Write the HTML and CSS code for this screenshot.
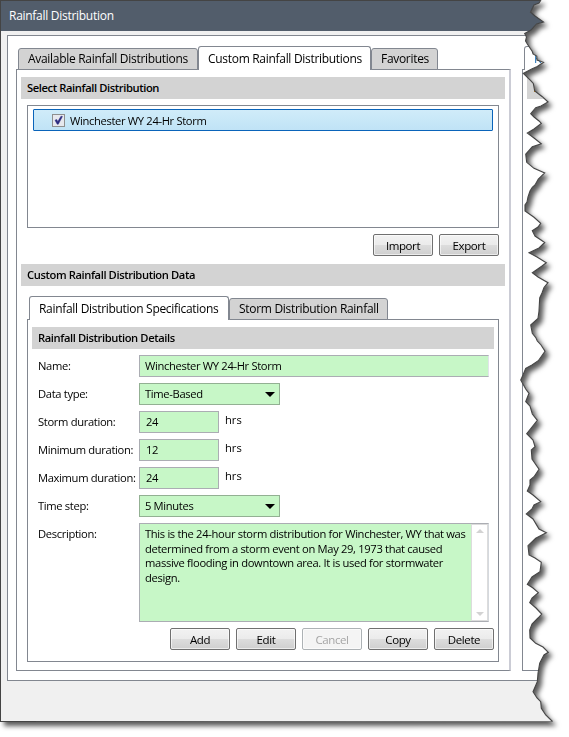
FILE: index.html
```html
<!DOCTYPE html>
<html lang="en">
<head>
    <meta charset="UTF-8">
    <meta name="viewport" content="width=device-width, initial-scale=1.0">
    <title>Rainfall Distribution</title>
    <link rel="stylesheet" href="styles.css">
</head>
<body>
    <div class="window-shadow">
        <div class="window">
            <div class="title-bar">Rainfall Distribution</div>
            <div class="main-panel">
                <div class="left-side">
                    <div class="tabs">
                        <div class="tab tab-available">Available Rainfall Distributions</div>
                        <div class="tab tab-custom active">Custom Rainfall Distributions</div>
                        <div class="tab tab-favorites">Favorites</div>
                    </div>
                    <div class="tab-page">
                        <div class="section-header">Select Rainfall Distribution</div>
                        <div class="list-box">
                            <div class="list-item">
                                <span class="check-box">
                                    <svg width="11" height="11" viewBox="0 0 11 11"><path d="M2 5.2 L3.7 4.5 L4.8 6.6 L8 1.2 L9.4 1.5 L5.3 9.2 L4.2 9.2 Z" fill="#2b2b80" stroke="#2b2b80" stroke-width="0.5"/></svg>
                                </span>
                                <span>Winchester WY 24-Hr Storm</span>
                            </div>
                        </div>
                        <div class="list-buttons">
                            <button class="btn">Import</button>
                            <button class="btn">Export</button>
                        </div>
                        <div class="section-header">Custom Rainfall Distribution Data</div>
                        <div class="tabs inner-tabs">
                            <div class="tab tab-specs active">Rainfall Distribution Specifications</div>
                            <div class="tab tab-storm">Storm Distribution Rainfall</div>
                        </div>
                        <div class="details">
                            <div class="section-header">Rainfall Distribution Details</div>
                            <div class="form">
                                <div class="row">
                                    <label>Name:</label>
                                    <div class="field field-wide">Winchester WY 24-Hr Storm</div>
                                </div>
                                <div class="row">
                                    <label>Data type:</label>
                                    <div class="field field-select"><span>Time-Based</span><i class="arrow"></i></div>
                                </div>
                                <div class="row">
                                    <label>Storm duration:</label>
                                    <div class="field field-num">24</div>
                                    <span class="unit">hrs</span>
                                </div>
                                <div class="row">
                                    <label>Minimum duration:</label>
                                    <div class="field field-num">12</div>
                                    <span class="unit">hrs</span>
                                </div>
                                <div class="row">
                                    <label>Maximum duration:</label>
                                    <div class="field field-num">24</div>
                                    <span class="unit">hrs</span>
                                </div>
                                <div class="row">
                                    <label>Time step:</label>
                                    <div class="field field-select"><span>5 Minutes</span><i class="arrow"></i></div>
                                </div>
                                <div class="row">
                                    <label>Description:</label>
                                    <div class="field field-area">
                                        <p>This is the 24-hour storm distribution for Winchester, WY that was<br>determined from a storm event on May 29, 1973 that caused<br>massive flooding in downtown area. It is used for stormwater<br>design.</p>
                                        <div class="scroll-bar"><i class="scroll-up"></i><i class="scroll-down"></i></div>
                                    </div>
                                </div>
                            </div>
                            <div class="form-buttons">
                                <button class="btn">Add</button>
                                <button class="btn">Edit</button>
                                <button class="btn" disabled>Cancel</button>
                                <button class="btn">Copy</button>
                                <button class="btn">Delete</button>
                            </div>
                        </div>
                    </div>
                </div>
                <div class="right-side">
                    <div class="tabs"><div class="tab active">R</div></div>
                    <div class="tab-page"><div class="section-header">R</div></div>
                </div>
            </div>
        </div>
    </div>

    <!-- torn right edge, clip shape and outline -->
    <svg class="torn-edge" width="569" height="737" viewBox="0 0 569 737">
        <defs>
            <clipPath id="torn-clip">
                <path d="M0 0 L541 0 L539 3 L534 5 L530.5 12 L535 16 L543.5 22 L536.5 24 L531 30 L524.7 33.5 L526.5 37 L525.5 41 L527.3 44 L532.3 51.5 L533 54 L536.7 56 L537 60 L543.5 62.3 L537.3 66.5 L531.7 69 L523.3 73.5 L530.7 80.7 L533.3 83.5 L534.7 91 L542.3 96.7 L548 102 L541 106 L535.7 107.7 L530.7 113.7 L534 117 L539 121 L541.3 123.5 L534 129 L527.3 133 L534 138 L541.3 143.7 L532.3 146.7 L525.7 154.3 L526.7 162.3 L534 168.3 L544.7 173 L538.3 179 L535 185 L532.3 187.3 L530 191 L528 197 L527 202 L525 205 L525 211 L534 217.3 L540.7 223.3 L538 227 L532.3 230.7 L535 236 L541 240 L544.7 242.5 L539 248 L529 252.7 L537 257 L546.3 262.7 L542 266 L532.3 272.7 L538 277 L548 282.7 L544 287.5 L542 293 L539.7 298 L539 311 L538 318.3 L530.7 325 L532.3 333.3 L536 338 L537.3 341 L541 345 L545 351.3 L538.3 360.7 L532 365 L525.7 368.3 L523 375 L520.7 380 L525.7 389 L529 393.3 L525.7 401.7 L530 406 L532.3 414 L537.3 420.3 L532 427 L526.7 433.7 L533 440 L535 446.7 L531.3 450 L532 459 L539 469.3 L534 476.7 L530 480 L530 485 L527.3 491 L533 495 L540.7 501.7 L534 505 L532 509 L526.3 514 L533 519 L539 529 L546.3 532.7 L535.7 538.3 L528 545.7 L529 555 L535 558 L541.3 562.3 L540 571.7 L532 577 L527.3 584.3 L533 588 L538.3 592.7 L532 598 L529.7 602.7 L536 608 L541.7 614 L538 618 L532 624 L529.7 630 L530 638 L535.7 643.3 L543 647 L548.3 652.3 L544 655 L539.7 663.3 L538 673.3 L537.3 681.7 L533 691.7 L537 698 L540.7 701.7 L541.3 708.3 L545.7 715 L552.5 721.5 L0 722 Z"/>
            </clipPath>
        </defs>
        <path class="tear-line" d="M541 0 L539 3 L534 5 L530.5 12 L535 16 L543.5 22 L536.5 24 L531 30 L524.7 33.5 L526.5 37 L525.5 41 L527.3 44 L532.3 51.5 L533 54 L536.7 56 L537 60 L543.5 62.3 L537.3 66.5 L531.7 69 L523.3 73.5 L530.7 80.7 L533.3 83.5 L534.7 91 L542.3 96.7 L548 102 L541 106 L535.7 107.7 L530.7 113.7 L534 117 L539 121 L541.3 123.5 L534 129 L527.3 133 L534 138 L541.3 143.7 L532.3 146.7 L525.7 154.3 L526.7 162.3 L534 168.3 L544.7 173 L538.3 179 L535 185 L532.3 187.3 L530 191 L528 197 L527 202 L525 205 L525 211 L534 217.3 L540.7 223.3 L538 227 L532.3 230.7 L535 236 L541 240 L544.7 242.5 L539 248 L529 252.7 L537 257 L546.3 262.7 L542 266 L532.3 272.7 L538 277 L548 282.7 L544 287.5 L542 293 L539.7 298 L539 311 L538 318.3 L530.7 325 L532.3 333.3 L536 338 L537.3 341 L541 345 L545 351.3 L538.3 360.7 L532 365 L525.7 368.3 L523 375 L520.7 380 L525.7 389 L529 393.3 L525.7 401.7 L530 406 L532.3 414 L537.3 420.3 L532 427 L526.7 433.7 L533 440 L535 446.7 L531.3 450 L532 459 L539 469.3 L534 476.7 L530 480 L530 485 L527.3 491 L533 495 L540.7 501.7 L534 505 L532 509 L526.3 514 L533 519 L539 529 L546.3 532.7 L535.7 538.3 L528 545.7 L529 555 L535 558 L541.3 562.3 L540 571.7 L532 577 L527.3 584.3 L533 588 L538.3 592.7 L532 598 L529.7 602.7 L536 608 L541.7 614 L538 618 L532 624 L529.7 630 L530 638 L535.7 643.3 L543 647 L548.3 652.3 L544 655 L539.7 663.3 L538 673.3 L537.3 681.7 L533 691.7 L537 698 L540.7 701.7 L541.3 708.3 L545.7 715 L552.5 721.5"/>
    </svg>
</body>
</html>
```
FILE: styles.css
```css
* {
    box-sizing: border-box;
}
body {
    margin: 0;
    width: 569px;
    height: 737px;
    overflow: hidden;
    background-color: #fff;
    font-family: "Open Sans", "Noto Sans", sans-serif;
    font-size: 11.2px;
    line-height: 16px;
    letter-spacing: -0.34px;
    color: #000;
}
.window-shadow {
    filter: drop-shadow(4px 4px 2.5px rgba(0,0,0,0.65));
}
.window {
    width: 569px;
    height: 722px;
    border: 1px solid #444;
    border-right: none;
    background-color: #f0f0f0;
    clip-path: url(#torn-clip);
}
.torn-edge {
    position: absolute;
    left: 0;
    top: 0;
}
.tear-line {
    fill: none;
    stroke: #444;
    stroke-width: 1.1;
}
.title-bar {
    height: 30px;
    padding: 7px 8px;
    background-color: #525d6b;
    color: #fff;
    font-size: 12px;
    letter-spacing: -0.28px;
}
.main-panel {
    display: flex;
    gap: 11px;
    height: 646px;
    margin: 4px 0 0 6px;
    padding: 10px 0 9px 8px;
    border: 1px solid #828790;
    border-right: none;
    background-color: #fff;
}
.left-side {
    display: flex;
    flex-direction: column;
    width: 495px;
    flex: none;
}
.right-side {
    display: flex;
    flex-direction: column;
    flex: 1;
}
.right-side .tab {
    color: #1c6fb5;
}
.right-side .section-header {
    color: #d98200;
}
.tabs {
    display: flex;
    align-items: flex-end;
    height: 24px;
    padding-left: 2px;
    margin-bottom: -1px;
    z-index: 1;
}
.tab {
    height: 22px;
    padding: 2px 9px 0;
    border: 1px solid #828790;
    border-radius: 3px 3px 0 0;
    background-color: #d3d3d3;
    font-size: 12px;
    letter-spacing: -0.3px;
    white-space: nowrap;
}
.tab.active {
    height: 24px;
    padding-top: 4px;
    border-bottom: none;
    background-color: #fff;
}
.tab-available { width: 180px; }
.tab-custom { width: 173px; }
.tab-favorites { width: 67px; }
.tab-specs { width: 200px; }
.tab-storm { width: 159px; }
.tab-page {
    flex: 1;
    padding: 7px 4px 0 4px;
    border: 1px solid #828790;
    border-right: 2px solid #cbccd5;
}
.section-header {
    height: 22px;
    padding: 3px 6px;
    background-color: #d3d3d3;
    font-weight: 600;
    letter-spacing: -0.4px;
    white-space: nowrap;
}
.list-box {
    width: 472px;
    height: 123px;
    margin: 6px 0 6px 6px;
    padding: 3px 5px;
    border: 1px solid #828790;
}
.list-item {
    display: flex;
    align-items: center;
    gap: 5px;
    height: 22px;
    padding-left: 18px;
    border: 1px solid #0a64ba;
    border-radius: 1px;
    background: linear-gradient(#d0ecf9, #c0e3f6);
}
.list-item span {
    margin-top: 1px;
}
.check-box {
    width: 13px;
    height: 13px;
    border: 1px solid #8e8f8f;
    background-color: #e6e8ee;
    line-height: 0;
}
.list-buttons {
    display: flex;
    justify-content: flex-end;
    gap: 6px;
    margin: 0 6px 8px 0;
}
.btn {
    width: 60px;
    height: 22px;
    padding: 0;
    border: 1px solid #707070;
    border-radius: 2px;
    background: linear-gradient(#f2f2f2 0%, #ebebeb 49%, #dddddd 50%, #cfcfcf 100%);
    box-shadow: inset 0 0 0 1px rgba(255,255,255,0.6);
    color: #000;
    font-family: inherit;
    font-size: 11.5px;
    letter-spacing: -0.4px;
}
.btn:disabled {
    border-color: #adb2b5;
    background: #f4f4f4;
    color: #a5a5a5;
}
.inner-tabs {
    margin: 10px 0 -1px 6px;
}
.details {
    width: 472px;
    height: 343px;
    margin-left: 6px;
    padding: 7px 4px 0;
    border: 1px solid #828790;
}
.form {
    display: flex;
    flex-direction: column;
    gap: 6px;
    padding: 6px 5px 6px 6px;
}
.row {
    display: flex;
}
.row label {
    width: 101px;
    padding-top: 3px;
    flex: none;
    white-space: nowrap;
}
.field {
    height: 22px;
    padding: 2px 5px;
    border: 1px solid #abadb3;
    background-color: #c7f7c7;
    white-space: nowrap;
}
.field-wide {
    width: 350px;
    border-right-color: #e0e4ea;
}
.field-select {
    display: flex;
    justify-content: space-between;
    align-items: center;
    width: 141px;
    padding-right: 4px;
    border-color: #93b093;
}
.field-num {
    width: 80px;
    padding-left: 6px;
}
.arrow {
    border: 5px solid transparent;
    border-top: 5px solid #000;
    border-bottom: none;
}
.unit {
    padding: 1px 6px;
    letter-spacing: 0;
}
.field-area {
    display: flex;
    justify-content: space-between;
    width: 350px;
    height: 99px;
    padding: 0 0 0 5px;
    border-right-color: #d5d9de;
}
.field-area p {
    margin: 3px 0 0;
    line-height: 14.6px;
}
.scroll-bar {
    display: flex;
    flex-direction: column;
    justify-content: space-between;
    align-items: center;
    flex: none;
    width: 17px;
    padding: 4px 0;
    border: 1px solid #dcdcdc;
    background-color: #fff;
}
.scroll-up {
    border: 4px solid transparent;
    border-bottom-color: #d3d3d3;
    border-top: none;
}
.scroll-down {
    border: 4px solid transparent;
    border-top-color: #d3d3d3;
    border-bottom: none;
}
.form-buttons {
    display: flex;
    justify-content: flex-end;
    gap: 6px;
}
```
